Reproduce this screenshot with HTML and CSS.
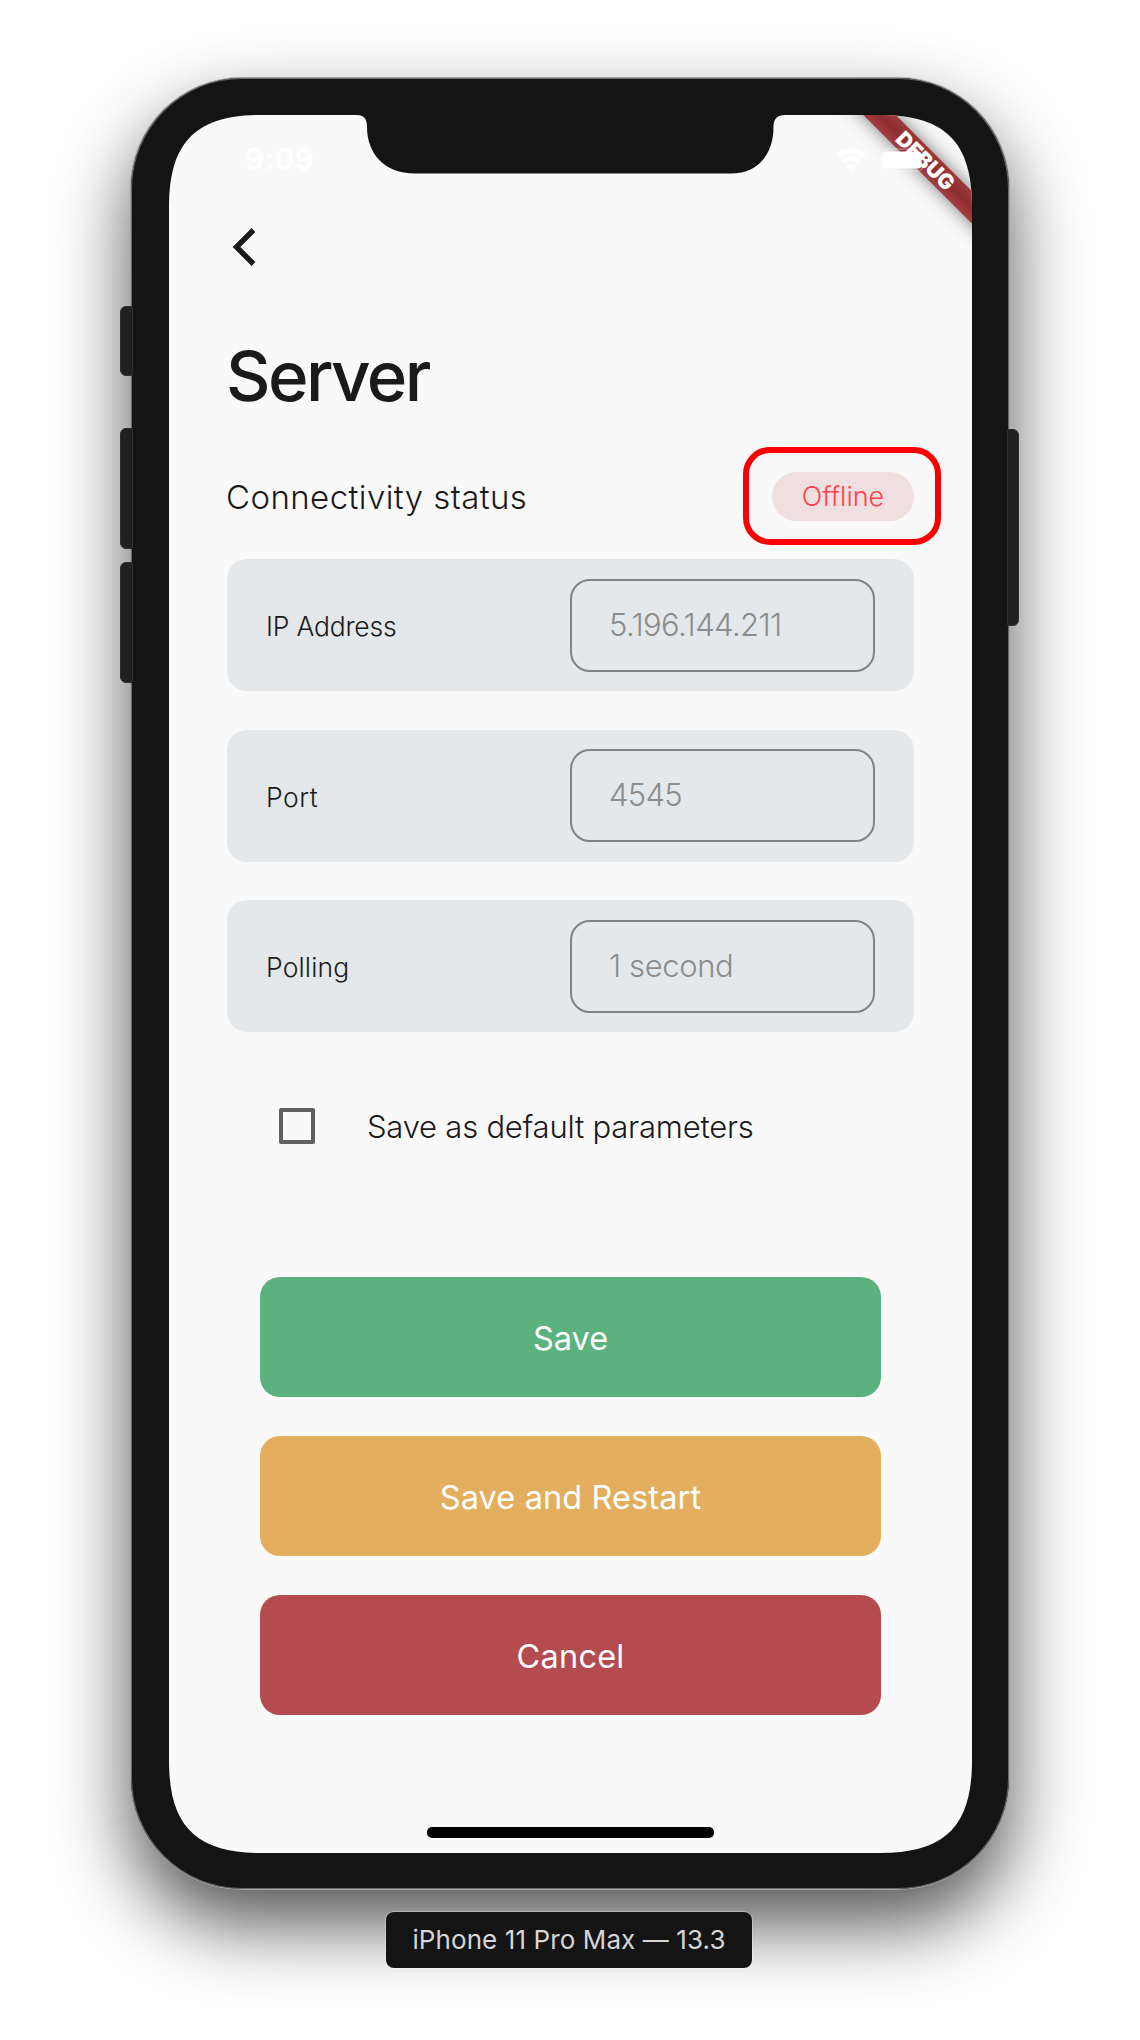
FILE: index.html
```html
<!DOCTYPE html>
<html lang="en">
<head>
<meta charset="utf-8">
<title>Server settings</title>
<link rel="stylesheet" href="styles.css">
</head>
<body>
<main class="stage">
  <div class="phone">
    <span class="key key-mute"></span>
    <span class="key key-up"></span>
    <span class="key key-down"></span>
    <span class="key key-power"></span>
    <div class="screen">
      <div class="ribbon">DEBUG</div>
      <header class="statusbar">
        <span class="clock">9:09</span>
        <svg class="status-icons" width="84" height="30" viewBox="0 0 84 30">
          <g fill="none" stroke="#fff" stroke-width="4.6">
            <path d="M2.500 12.500A19 19 0 0 1 29.500 12.500"/>
            <path d="M7.800 18A11.500 11.500 0 0 1 24.200 18"/>
          </g>
          <path d="M11.500 22.500Q16 18.500 20.500 22.500L16 27Z" fill="#fff"/>
          <rect x="45.500" y="5" width="43" height="22" rx="6" fill="none" stroke="#fff" stroke-opacity=".22" stroke-width="2"/>
          <rect x="47.500" y="7.500" width="39" height="17" rx="3.500" fill="#fff"/>
        </svg>
      </header>
      <svg class="notch" width="434" height="60" viewBox="0 0 434 60">
        <path d="M0 0H4C12 0 14 5 14 12C14 38 31 58.500 62 58.500H378C407 58.500 420.500 37 420.500 12C420.500 4 424 0 432 0Z" fill="#141414"/>
      </svg>
      <nav class="nav">
        <svg width="24" height="42" viewBox="0 0 24 42"><path d="M21.500 4L4.500 21L21.500 38" fill="none" stroke="#1a1a1a" stroke-width="5.400"/></svg>
      </nav>
      <section class="content">
        <h1 class="title">Server</h1>
        <div class="connectivity">
          <span class="connectivity-label">Connectivity status</span>
          <span class="pill">Offline</span>
          <span class="highlight"></span>
        </div>
        <div class="fields">
          <div class="field"><span class="label label-ip">IP Address</span><span class="input value-ip">5.196.144.211</span></div>
          <div class="field"><span class="label label-port">Port</span><span class="input value-port">4545</span></div>
          <div class="field"><span class="label label-poll">Polling</span><span class="input value-poll">1 second</span></div>
        </div>
        <div class="default-row"><span class="checkbox"></span><span class="default-label">Save as default parameters</span></div>
        <div class="actions">
          <div class="button save">Save</div>
          <div class="button restart">Save and Restart</div>
          <div class="button cancel">Cancel</div>
        </div>
      </section>
      <span class="home"></span>
    </div>
  </div>
  <div class="device">iPhone 11 Pro Max — 13.3</div>
</main>
</body>
</html>
```
FILE: styles.css
```css
* { box-sizing: border-box; }
body {
  margin: 0;
  background: #fff;
  font-family: Inter, "Liberation Sans", sans-serif;
  color: #1a1a1a;
}
.stage {
  width: 1140px;
  height: 2040px;
  padding-top: 78px;
  overflow: hidden;
}
.phone {
  position: relative;
  width: 878px;
  height: 1811px;
  margin-left: 131px;
  padding: 37px 37px 36px 38px;
  border-radius: 111px;
  background: #141414;
  box-shadow: inset 0 0 0 1px #6a6a6a, 0 0 0 1px #a2a2a2, 0 35px 76px rgba(0, 0, 0, .68);
}
.key {
  position: absolute;
  left: -11px;
  width: 13px;
  border-radius: 6px 2px 2px 6px;
  background: #202020;
  border: 1px solid #303030;
}
.key-mute { top: 228px; height: 70px; }
.key-up { top: 350px; height: 121px; }
.key-down { top: 484px; height: 121px; }
.key-power {
  left: auto;
  right: -10px;
  top: 351px;
  width: 12px;
  height: 197px;
  border-radius: 2px 6px 6px 2px;
}
.screen {
  position: relative;
  height: 1738px;
  background: #f9f9f9;
  clip-path: path("M0 92C0 27 27 0 92 0H711C776 0 803 27 803 92V1646C803 1711 776 1738 711 1738H92C27 1738 0 1711 0 1646Z");
}
.notch { position: absolute; left: 184px; top: 0; }
.ribbon {
  position: absolute;
  left: 655px;
  top: 33px;
  width: 200px;
  height: 23px;
  padding-left: 4px;
  transform: rotate(45deg);
  background: linear-gradient(#9e3a3d, #8f2d30 50%, #a43e41);
  box-shadow: 0 0 18px rgba(0, 0, 0, .5);
  color: #fff;
  font: 900 21px/23px Inter, sans-serif;
  text-align: center;
}
.statusbar {
  position: relative;
  display: flex;
  align-items: center;
  justify-content: space-between;
  height: 88px;
  padding: 0 53px 0 76px;
  color: #fff;
}
.clock { font-size: 30px; font-weight: 600; letter-spacing: .4px; }
.status-icons { overflow: visible; }
.nav {
  display: flex;
  align-items: center;
  height: 88px;
  padding-left: 63px;
}
.content { padding: 44px 58px 0; }
.title {
  margin: 0 0 0 -1px;
  padding-top: 1px;
  font-size: 69px;
  font-weight: 500;
  line-height: 80px;
  letter-spacing: -2.6px;
}
.connectivity {
  position: relative;
  display: flex;
  align-items: center;
  justify-content: space-between;
  height: 98px;
  margin-top: 31px;
}
.connectivity-label {
  margin-left: -1px;
  padding-top: 2px;
  font-size: 33px;
  font-weight: 340;
  letter-spacing: .42px;
}
.pill {
  width: 142px;
  height: 49px;
  border-radius: 25px;
  background: #f0dfdf;
  color: #ff4250;
  font-size: 27px;
  font-weight: 340;
  line-height: 50px;
  text-align: center;
}
.highlight {
  position: absolute;
  right: -27px;
  top: 0;
  width: 198px;
  height: 98px;
  border: 6px solid #fb0000;
  border-radius: 27px;
}
.fields {
  display: grid;
  gap: 38.7px;
  margin-top: 14px;
}
.field {
  display: flex;
  align-items: center;
  justify-content: space-between;
  height: 132px;
  padding: 0 39px;
  border-radius: 20px;
  background: #e5e8eb;
}
.label { padding-top: 2px; font-size: 26.5px; font-weight: 340; }
.label-ip { letter-spacing: -.2px; }
.label-port { letter-spacing: .5px; }
.label-poll { letter-spacing: .15px; }
.input {
  width: 305px;
  height: 93px;
  padding-left: 37px;
  border: 2px solid #828282;
  border-radius: 20px;
  color: #8c8c8c;
  font-size: 31px;
  font-weight: 340;
  line-height: 87px;
  white-space: nowrap;
}
.value-ip { letter-spacing: -.6px; }
.value-port { letter-spacing: -.7px; }
.value-poll { letter-spacing: -.4px; }
.default-row {
  display: flex;
  align-items: center;
  gap: 52px;
  height: 60px;
  margin-top: 64px;
  padding-left: 52px;
}
.checkbox {
  width: 36px;
  height: 36px;
  border: 4px solid #616161;
  border-radius: 2px;
}
.default-label {
  font-size: 31px;
  font-weight: 340;
  letter-spacing: -.22px;
  white-space: nowrap;
}
.actions {
  display: grid;
  gap: 39px;
  margin-top: 121px;
  padding: 0 33px;
}
.button {
  height: 120px;
  border-radius: 20px;
  color: #fff;
  font-size: 32.5px;
  font-weight: 400;
  line-height: 123px;
  text-align: center;
}
.save { background: #5bb27e; }
.restart { background: #e3ae5d; letter-spacing: .1px; }
.cancel { background: #b44b4e; letter-spacing: .2px; }
.home {
  position: absolute;
  left: 258px;
  bottom: 15px;
  width: 287px;
  height: 11px;
  border-radius: 5px;
  background: #000;
}
.device {
  position: relative;
  width: 366px;
  height: 56px;
  margin: 23px 0 0 386px;
  border-radius: 8px;
  background: #141414;
  box-shadow: 0 0 0 1px rgba(255, 255, 255, .3);
  color: #d6d6d6;
  font-size: 26px;
  letter-spacing: .1px;
  line-height: 56px;
  text-align: center;
}
```
